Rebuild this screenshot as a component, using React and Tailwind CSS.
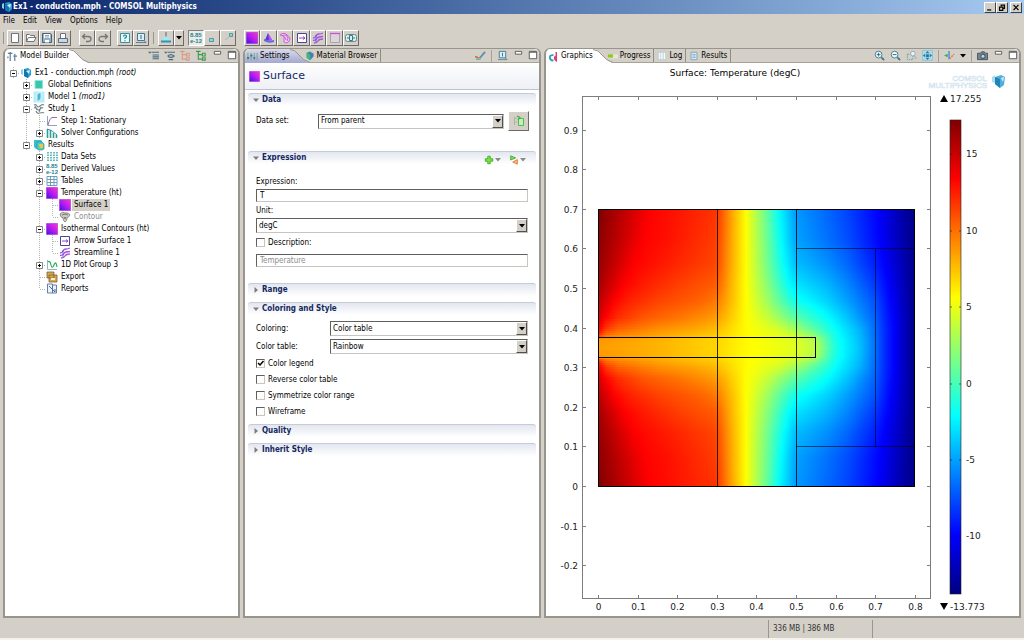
import { useState } from "react";
import clsx from "clsx";

// 12 x 12 drawings shared by the toolbar, the tabs and the model tree
const icons = {
  logo: (
    <>
      <path d="M4 2l4-1 3 2v5l-3 3-4-2z" fill="#2a9fd0" />
      <path d="M4 2l4 2v7L4 9z" fill="#1376ae" />
      <path d="M1 3l2-1v6L1 7z" fill="#7fd3ee" />
      <path d="M6 4l4-1-1 4z" fill="#c9f0fb" />
    </>
  ),
  file: <path d="M2.5 1.5h7v9h-7z" fill="#fff" stroke="#6b7480" />,
  open: <path d="M1.5 9.5v-7h3l1 1h4v2M1.5 9.5l2-4h7.5l-2 4z" fill="#fdfdf4" stroke="#6b7480" />,
  save: (
    <>
      <path d="M1.5 1.5h8l1 1v8h-9z" fill="#8fb3c8" stroke="#4b6272" />
      <path d="M3 2h6v4H3zM4 8h4v2.5H4z" fill="#fff" />
      <path d="M4 3.5h4M4 5h4" stroke="#4b6272" strokeWidth=".6" />
    </>
  ),
  print: (
    <>
      <path d="M3.5 1.5h5v5h-5z" fill="#fff" stroke="#6b7480" />
      <path d="M1.5 6.5h9v4h-9z" fill="#c4dbe6" stroke="#5a6f80" />
    </>
  ),
  undo: <path d="M4 2L1.5 4.5 4 7M2 4.5h5q3 0 3 2.5T7 9.5H5" fill="none" stroke="#767676" strokeWidth="1.3" />,
  redo: <path d="M8 2l2.5 2.5L8 7M10 4.5H5Q2 4.5 2 7t3 2.5h2" fill="none" stroke="#767676" strokeWidth="1.3" />,
  help: (
    <>
      <path d="M1.5 1.5h9v9h-9z" fill="#e4fafa" stroke="#3d8f9c" />
      <path d="M4.5 4.5Q4.5 3 6 3t1.5 1.5Q7.5 5.5 6 6v1M6 8.2v1" fill="none" stroke="#1b7f90" strokeWidth="1.2" />
    </>
  ),
  docs: (
    <>
      <path d="M2.5 1.5h7v7h-7z" fill="#d9f1f7" stroke="#44778f" />
      <path d="M6 3v4" stroke="#34678a" />
      <path d="M1 10.5h10L9 8.5" fill="none" stroke="#5f8098" />
    </>
  ),
  brush: (
    <>
      <path d="M6 0v5" stroke="#8a8a8a" strokeWidth="1.5" />
      <path d="M4 4.5h4l2 4H2z" fill="#9eeaf2" />
      <path d="M1 9.5h10" stroke="#2f94b4" strokeWidth="2" />
    </>
  ),
  axes: <path d="M3.5 6.5h4v3h-4z" fill="#8fd4dd" stroke="#3a8b98" strokeWidth=".8" />,
  corner: (
    <>
      <path d="M7.5 1.5h3v3h-3z" fill="#8fd4dd" stroke="#3a8b98" strokeWidth=".8" />
      <path d="M3 8l4-3" stroke="#9ab4ba" strokeWidth=".8" />
    </>
  ),
  surface: <path d="M.5.5h11v11H.5z" fill="url(#surfaceFill)" stroke="#a02fd0" strokeWidth=".6" />,
  cone: (
    <>
      <path d="M5 1l4 7H2z" fill="#4b3fdc" />
      <path d="M5 1l4 7H6z" fill="#c74bf0" />
      <path d="M1 7q5 2 10 1v2q-5 2-10-1z" fill="#6f66e4" />
    </>
  ),
  contour: (
    <>
      <path d="M1 3q3-3 6-1t4 5q-1 4-4 4T5 7 1 3z" fill="#f6cdf5" stroke="#c85fd8" />
      <path d="M3 4q3-2 5 0t0 5M5 5q2 0 2 3" fill="none" stroke="#c85fd8" />
    </>
  ),
  arrow: (
    <>
      <path d="M1.5 1.5h9v9h-9z" fill="#fff" stroke="#47479a" />
      <path d="M3 6h5M7 4.5L9 6 7 7.5" fill="none" stroke="#9a3fd0" />
    </>
  ),
  stream: (
    <>
      <path d="M1 6q2 0 3-2t3-2 4-1M1 8.5q3 0 4-2t6-2M2 11q3 0 4-2t5-2" fill="none" stroke="#a955e0" strokeWidth="1.3" />
      <path d="M4 3v7" stroke="#4b4bd0" strokeWidth=".8" />
    </>
  ),
  frame: (
    <>
      <path d="M1.5 1.5h9v9h-9z" fill="#dcd6da" stroke="#a79aac" strokeWidth=".9" />
      <path d="M1 1.5h10" stroke="#c455d8" strokeWidth="1.3" />
    </>
  ),
  play: (
    <>
      <rect x=".5" y="2.5" width="11" height="7" rx="2" fill="#dcefee" stroke="#5b8c94" />
      <path d="M4.5 3.5h3v5h-3zM2 6h2M8 6h2" fill="none" stroke="#3b7781" />
    </>
  ),
  global: <path d="M2 1.5h7.5v8H2z" fill="#37c7ae" stroke="#90e6d8" />,
  model: (
    <>
      <path d="M.5.5h11v11H.5z" fill="#b7eef6" />
      <path d="M4 3l4-2v7l-4 3z" fill="#4db4dc" stroke="#eefcff" strokeWidth=".8" />
    </>
  ),
  study: (
    <path
      d="M1 2q2-1 3 1t3 0 4-1M1 5q2-1 3 1t3 0 3-1M3 8q1 3 4 2t4 0M2 3l2 4M8 4L6 9"
      fill="none"
      stroke="#73828c"
      strokeWidth="1.1"
    />
  ),
  step: (
    <>
      <path d="M1.5 1v9.5H11" fill="none" stroke="#90a0c4" />
      <path d="M2 10Q4 3 6 2.500h5" fill="none" stroke="#9a6aa8" />
    </>
  ),
  solver: (
    <>
      <path d="M1.5 2v9M4.500 3v8M7.500 6v5M10.500 8v3" stroke="#2aa189" strokeWidth="1.6" />
      <path d="M1 2q4 0 10 6" fill="none" stroke="#3b8fc4" />
    </>
  ),
  results: (
    <>
      <path d="M1 1h7l1 1v8H3L1 8z" fill="#37bcd8" />
      <path d="M4 3h5l2 2v5l-2 1H5L4 9z" fill="#4fd0b0" stroke="#2b93b4" strokeWidth=".7" />
      <path d="M6 5h4v4H7z" fill="#f2c63a" />
    </>
  ),
  data: <path d="M2 1v10M5 1v10M8 1v10M11 1v10" stroke="#38a8a8" strokeWidth="1.5" strokeDasharray="1.5 1" />,
  digits: (
    <g fill="#1b8591" fontFamily="Liberation Sans" fontSize="6" fontWeight="700">
      <text x="0" y="5">8.85</text>
      <text x="0" y="11">e-12</text>
    </g>
  ),
  table: (
    <>
      <path d="M1 1.5h10v9H1z" fill="#fff" stroke="#6f9fb8" />
      <path d="M1 4.5h10M1 7.5h10M4.5 1v10M8 1v10" stroke="#6f9fb8" />
    </>
  ),
  contourOff: (
    <>
      <path d="M1 3q2-3 5-1 4-1 5 2-1 2-3 3 0 3-2 4-2-1-2-4-3-1-3-4z" fill="#c9c9c2" stroke="#8e8e86" />
      <path d="M3 4q3-2 6 0M5 6l1 2 1-2" fill="none" stroke="#77776f" />
    </>
  ),
  plot1d: (
    <>
      <path d="M1.5 1v9.5H11" fill="none" stroke="#90b8c4" />
      <path d="M2 3q2-2 3 3t3 0 3 2" fill="none" stroke="#2dae5d" strokeWidth="1.2" />
    </>
  ),
  exportIcon: (
    <>
      <path d="M1 1h7v6H1zM3 4h8v7H3z" fill="#d9a64e" stroke="#7b6234" strokeWidth=".8" />
      <path d="M5 7h4v2H5z" fill="#fff2c8" />
    </>
  ),
  report: (
    <>
      <path d="M1.5 1h5v9h-5zM6.5 2h4v8h-4z" fill="#eaf4fc" stroke="#56749a" strokeWidth=".9" />
      <path d="M3 3l6 6M9 9V6" fill="none" stroke="#4a6a94" />
    </>
  ),
  builder: <path d="M3.5 1v10M1 2.5h5M8.5 3v8M7 5.5h4M1 6v2" stroke="#5d7f98" strokeWidth="1.3" />,
  settings: (
    <>
      <path d="M1 2v8M4.5 2v8M8 2v8M11 2v8" stroke="#6d9a8d" strokeWidth=".9" />
      <path d="M0 7.5h2.5M3.5 5H6M7 7.5h2" stroke="#2f8573" strokeWidth="2" />
    </>
  ),
  material: (
    <>
      <path d="M2 2l4-1.5L10 3v4l-4 4-4-3z" fill="#2f91a2" />
      <path d="M2 2l4 2v7L2 8z" fill="#3fb58b" />
      <path d="M6 4l4-1v4z" fill="#7d5bb4" />
    </>
  ),
  graphics: (
    <>
      <path d="M6 4.5Q2 4 2 7t4 3.500" fill="none" stroke="#2a9fc0" strokeWidth="2" />
      <path d="M9 1v9.500q-3-2-1-5" fill="none" stroke="#e0386f" strokeWidth="1.6" />
    </>
  ),
  progress: (
    <>
      <path d="M0 4h12v5H0z" fill="#e6e6d8" />
      <path d="M0 4h6v4H0z" fill="#8fc62a" />
    </>
  ),
  log: <path d="M1.5 1.5h9v9h-9zM4.5 1.5v9M7.5 1.5v9" fill="#f5fafc" stroke="#a9c1ce" strokeWidth=".8" />,
  list: (
    <>
      <path d="M2.5 1.5h7v9h-7z" fill="#e7f4fb" stroke="#6e9ab5" />
      <path d="M4 4h4M4 6h4M4 8h4" stroke="#4d87a8" strokeWidth=".8" />
    </>
  ),
  collapse: (
    <>
      <path d="M0 2h4L2 4z" fill="#4b6b80" />
      <path d="M4 2.5h8M5 5.5h7M5 7.5h7M5 9.5h7" stroke="#4b6b80" strokeWidth="1.2" />
    </>
  ),
  show: (
    <>
      <path d="M0 2h4L2 4z" fill="#4b6b80" />
      <path d="M4 2.5h8M5 10.5h5M4 6.5q3.500-3 7 0-3.500 3-7 0" fill="none" stroke="#4b6b80" strokeWidth="1.2" />
    </>
  ),
  treeRed: <path d="M2.5 1v9.500M2.500 5h4M2.500 10h4M0 1.500h5M7 3.500h3v3H7zM7 8.500h3V11H7z" fill="none" stroke="#d99a83" strokeWidth="1.2" />,
  treeGreen: <path d="M2.5 1v9.500M2.500 5h4M2.500 10h4M0 1.500h5M7 3.500h3v3H7zM7 8.500h3V11H7z" fill="none" stroke="#3d9a4b" strokeWidth="1.2" />,
  paint: (
    <>
      <path d="M5 9l6-7" fill="none" stroke="#5a8faa" strokeWidth="2" />
      <path d="M0 7l4 1.500" stroke="#e05a3d" strokeWidth="1.5" />
      <path d="M1 10h5" stroke="#4cb072" strokeWidth="1.2" />
    </>
  ),
  zoomIn: (
    <>
      <circle cx="5" cy="5" r="3.7" fill="#e8f7fb" stroke="#48788c" />
      <path d="M3 5h4M5 3v4" stroke="#2b6a80" />
      <path d="M8 8l3 3" stroke="#48788c" strokeWidth="2" />
    </>
  ),
  zoomOut: (
    <>
      <circle cx="5" cy="5" r="3.7" fill="#e8f7fb" stroke="#48788c" />
      <path d="M3 5h4" stroke="#2b6a80" />
      <path d="M8 8l3 3" stroke="#48788c" strokeWidth="2" />
    </>
  ),
  zoomBox: (
    <>
      <path d="M1.5 4.5h6v6h-6z" fill="none" stroke="#5e9ab0" strokeDasharray="1.5 1" />
      <circle cx="7.5" cy="4" r="2.5" fill="#e8f7fb" stroke="#8fa9b4" />
      <path d="M9 6l2.5 4" stroke="#8fa9b4" />
    </>
  ),
  extents: (
    <>
      <path d="M.5.5h11v11H.5z" fill="#a8dbe9" stroke="#8cc5d6" />
      <path d="M6 1l2 2.500H4zM6 11l2-2.500H4zM1 6l2.500-2v4zM11 6L8.500 4v4zM4.500 4.500h3v3h-3z" fill="#27749a" />
    </>
  ),
  view: (
    <>
      <path d="M5.500 1v9" stroke="#3a86d4" strokeWidth="1.4" />
      <path d="M0 6l4-2v4z" fill="#32b25a" />
      <path d="M6 9.500l5-5" stroke="#e2743b" strokeWidth="1.6" strokeDasharray="2 1" />
    </>
  ),
  camera: (
    <>
      <path d="M.5 3.5H4L5 2h3l1 1.5h2.5v7H.5z" fill="#75858f" stroke="#44535e" />
      <circle cx="6.5" cy="6.800" r="2.3" fill="#b9d5df" stroke="#33434e" />
    </>
  ),
  minimize: <path d="M2.5 1.5h7v3h-7z" fill="#fff" stroke="#555" />,
  maximize: <path d="M2.5 1.5h8v8h-8zM2.5 2.5h8" fill="#fff" stroke="#555" />,
  plus: <path d="M4.5 1.5h3v3h3v3h-3v3h-3v-3h-3v-3h3z" fill="#7ce04b" stroke="#38a81e" />,
  replace: (
    <>
      <path d="M2 1l6 2.500L2 6z" fill="#8fdc5c" stroke="#3ba32c" />
      <path d="M10 5.500V11L4.500 8.500z" fill="#f7b780" stroke="#e0762c" />
    </>
  ),
  goto: (
    <>
      <path d="M1.5 2v8M1.5 3h3M1.5 7h3" stroke="#a8b8a8" />
      <path d="M5.5 3.5h5v7h-5z" fill="#c4efb9" stroke="#55b955" />
      <path d="M4 1l3 1.500L5 5" fill="none" stroke="#3fae3f" strokeWidth="1.2" />
    </>
  ),
};

function Icon({ name, className = "size-3" }) {
  return (
    <svg viewBox="0 0 12 12" className={clsx("shrink-0", className)} aria-hidden="true">
      {icons[name]}
    </svg>
  );
}

function Caret({ className = "text-black" }) {
  return (
    <svg viewBox="0 0 6 4" className={clsx("h-1 w-[6px] shrink-0", className)} aria-hidden="true">
      <path d="M0 0h6L3 3.5z" fill="currentColor" />
    </svg>
  );
}

const winButtons = [
  { label: "Minimize", path: "M2 8.5h5" },
  { label: "Restore", path: "M4.5 4V2.5h4v4H7M2.5 5h4v4h-4z" },
  { label: "Close", path: "M2.5 2.5l6 6M8.5 2.5l-6 6" },
];

function TitleBar() {
  return (
    <header className="flex h-[14px] items-center bg-linear-to-r from-[#0a246a] to-[#a6caf0] pr-[2px] pl-px text-white">
      <Icon name="logo" />
      <h1 className="flex-1 text-[8px] leading-3 font-bold">Ex1 - conduction.mph - COMSOL Multiphysics</h1>
      {winButtons.map((button) => (
        <button
          key={button.label}
          aria-label={button.label}
          className="h-[11px] w-3 border border-t-white border-r-[#404040] border-b-[#404040] border-l-white bg-[#d4d0c8] last:ml-[2px]"
        >
          <svg viewBox="0 0 11 11" className="size-full" aria-hidden="true">
            <path d={button.path} fill="none" stroke="#000" strokeWidth="1.5" />
          </svg>
        </button>
      ))}
    </header>
  );
}

function MenuBar() {
  return (
    <nav className="flex h-[14px] items-center gap-2 pl-[3px]">
      {["File", "Edit", "View", "Options", "Help"].map((item) => (
        <button key={item}>{item}</button>
      ))}
    </nav>
  );
}

function ToolButton({ icon, label, pressed = false, className = "w-4" }) {
  return (
    <button
      aria-label={label}
      className={clsx(
        "flex h-4 items-center justify-center border",
        pressed
          ? "border-t-[#808080] border-r-white border-b-white border-l-[#808080] bg-[#eceae6]"
          : "border-t-white border-r-[#6e6b66] border-b-[#6e6b66] border-l-white",
        className
      )}
    >
      {icon === "caret" ? <Caret /> : <Icon name={icon} />}
    </button>
  );
}

const Divider = () => <span className="mx-1 h-3 w-px bg-[#9a968e]" />;

function Toolbar() {
  return (
    <div className="flex h-5 items-center pb-px pl-[3px]">
      <span className="mr-[3px] h-3 w-px bg-[#9a968e]" />
      <div className="flex">
        <ToolButton icon="file" label="New" />
        <ToolButton icon="open" label="Open" />
        <ToolButton icon="save" label="Save" />
        <ToolButton icon="print" label="Print" />
      </div>
      <div className="ml-2 flex">
        <ToolButton icon="undo" label="Undo" />
        <ToolButton icon="redo" label="Redo" />
      </div>
      <div className="ml-[6px] flex">
        <ToolButton icon="help" label="Help" />
        <ToolButton icon="docs" label="Documentation" />
      </div>
      <Divider />
      <div className="flex">
        <ToolButton icon="brush" label="Clear" />
        <ToolButton icon="caret" label="Clear options" className="w-[10px]" />
      </div>
      <div className="ml-1 flex">
        <ToolButton icon="digits" label="Precision" pressed />
        <ToolButton icon="axes" label="Point" />
        <ToolButton icon="corner" label="Corner" />
      </div>
      <div className="ml-2 flex">
        <ToolButton icon="surface" label="Surface" />
        <ToolButton icon="cone" label="Height" className="w-[17px]" />
        <ToolButton icon="contour" label="Contour" />
        <ToolButton icon="arrow" label="Arrow Surface" className="w-[17px]" />
        <ToolButton icon="stream" label="Streamline" />
        <ToolButton icon="frame" label="Boundary" className="w-[17px]" />
        <ToolButton icon="play" label="Player" />
      </div>
    </div>
  );
}

function ViewButton({ icon }) {
  return (
    <button aria-label={icon} className="flex">
      <Icon name={icon} className="size-[11px]" />
    </button>
  );
}

function TabStrip({ active, icon, focused = false, others = [], children }) {
  return (
    <div className="flex h-[14px] items-stretch rounded-t-md border-b border-[#a5a29a] bg-[#d4d0c8]">
      <div
        className={clsx(
          "-mb-px flex items-center gap-[2px] rounded-tl-md pl-[2px]",
          focused ? "bg-linear-to-b from-[#dadbe8] to-[#a4a9cf]" : "bg-white"
        )}
      >
        <Icon name={icon} className="size-[11px]" />
        <button className="text-left">{active}</button>
      </div>
      <svg viewBox="0 0 20 14" className="-mr-2 -mb-px h-[14px] w-5 shrink-0" aria-hidden="true">
        <path d="M0 0Q5 0 9 6t11 8H0z" fill={focused ? "url(#focusedTab)" : "#fff"} />
        <path d="M0 .5Q5 .5 9 6t11 7.500" fill="none" stroke="#98958e" />
      </svg>
      {others.map((tab) => (
        <button
          key={tab.label}
          className="flex items-center gap-[2px] border-r border-[#908d86] px-[3px] pt-px leading-3"
        >
          <Icon name={tab.icon} className="size-[10px]" />
          {tab.label}
        </button>
      ))}
      <div className="flex flex-1 items-center justify-end gap-[5px] pr-px">
        {children}
        <div className="flex gap-[3px]">
          <ViewButton icon="minimize" />
          <ViewButton icon="maximize" />
        </div>
      </div>
    </div>
  );
}

function Panel({ tabs, children }) {
  return (
    <section className="flex min-w-0 flex-col rounded-t-md border-x-2 border-t border-b-2 border-[#98958f] bg-white">
      {tabs}
      {children}
    </section>
  );
}

// guides: one letter for each column left of the icon
// " " empty, "|" line, "t" tee, "l" elbow, "+" / "-" expander, lower rows joined by the line
const tree = [
  { guides: "-", icon: "logo", label: "Ex1 - conduction.mph", tag: "(root)" },
  { guides: " +", icon: "global", label: "Global Definitions" },
  { guides: " +", icon: "model", label: "Model 1", tag: "(mod1)" },
  { guides: " -", icon: "study", label: "Study 1" },
  { guides: " |t", icon: "step", label: "Step 1: Stationary" },
  { guides: " |+", icon: "solver", label: "Solver Configurations" },
  { guides: " -", icon: "results", label: "Results" },
  { guides: "  +", icon: "data", label: "Data Sets" },
  { guides: "  +", icon: "digits", label: "Derived Values" },
  { guides: "  +", icon: "table", label: "Tables" },
  { guides: "  -", icon: "surface", label: "Temperature (ht)" },
  { guides: "  |t", icon: "surface", label: "Surface 1" },
  { guides: "  |l", icon: "contourOff", label: "Contour", off: true },
  { guides: "  -", icon: "surface", label: "Isothermal Contours (ht)" },
  { guides: "  |t", icon: "arrow", label: "Arrow Surface 1" },
  { guides: "  |l", icon: "stream", label: "Streamline 1" },
  { guides: "  +", icon: "plot1d", label: "1D Plot Group 3" },
  { guides: "  t", icon: "exportIcon", label: "Export" },
  { guides: "  l", icon: "report", label: "Reports" },
];

function Guide({ kind }) {
  const box = kind === "+" || kind === "-";
  return (
    <svg viewBox="0 0 13 12" className="h-3 w-[13px] shrink-0" aria-hidden="true">
      <g stroke="#b4b4b4" strokeDasharray="1 1">
        {kind !== " " && <path d={kind === "l" ? "M6.5 0v6" : "M6.5 0v12"} />}
        {kind !== " " && kind !== "|" && <path d="M7 6.5h6" />}
      </g>
      {box && <path d="M3.5 3.5h6v6h-6z" fill="#fff" stroke="#848484" />}
      {box && <path d={kind === "+" ? "M5 6.5h3M6.5 5v3" : "M5 6.5h3"} stroke="#000" />}
    </svg>
  );
}

function ModelTree() {
  const [selected, setSelected] = useState("Surface 1");

  return (
    <ul className="pt-1 pl-[2px]" role="tree">
      {tree.map((node) => (
        <li
          key={node.label}
          role="treeitem"
          aria-selected={selected === node.label}
          className="flex h-3 items-center"
        >
          {node.guides.split("").map((kind, i) => (
            <Guide key={i} kind={kind} />
          ))}
          <Icon name={node.icon} />
          <button
            onClick={() => setSelected(node.label)}
            className={clsx(
              "ml-px px-[2px] leading-3 whitespace-nowrap",
              selected === node.label && "bg-[#d4d0c8]",
              node.off && "text-[#8c8c8c]"
            )}
          >
            {node.label} {node.tag && <i>{node.tag}</i>}
          </button>
        </li>
      ))}
    </ul>
  );
}

function SectionHeader({ title, open = false, children }) {
  return (
    <div className="mx-[3px] flex h-[13px] items-center rounded-t-[3px] border-t border-[#c6cbd8] bg-linear-to-b from-[#e2e6ef] to-white pl-[5px]">
      <svg viewBox="0 0 6 6" className="size-[6px]" aria-hidden="true">
        <path d={open ? "M0 1.5h6L3 5z" : "M1.5 0L5 3 1.5 6z"} fill="#7d7d7d" />
      </svg>
      <h3 className="ml-[3px] flex-1 font-bold text-[#14285f]">{title}</h3>
      {children}
    </div>
  );
}

function SelectBox({ id, value, className }) {
  return (
    <div className={clsx("relative h-[15px]", className)}>
      <select
        id={id}
        defaultValue={value}
        className="size-full appearance-none border border-t-[#606060] border-r-[#c8c5be] border-b-[#c8c5be] border-l-[#606060] bg-white pl-[2px] leading-3"
      >
        <option>{value}</option>
      </select>
      <span className="pointer-events-none absolute inset-y-px right-px flex w-[11px] items-center justify-center border border-t-white border-r-[#505050] border-b-[#505050] border-l-white bg-[#d4d0c8]">
        <Caret />
      </span>
    </div>
  );
}

function CheckBox({ label, checked = false }) {
  return (
    <label className="flex h-3 items-center gap-[3px]">
      <span className="grid size-[9px] -translate-y-px">
        <input
          type="checkbox"
          defaultChecked={checked}
          className="peer col-start-1 row-start-1 size-[9px] appearance-none border border-t-[#606060] border-r-[#c8c5be] border-b-[#c8c5be] border-l-[#606060] bg-white"
        />
        <svg
          viewBox="0 0 9 9"
          className="pointer-events-none invisible col-start-1 row-start-1 size-[9px] peer-checked:visible"
          aria-hidden="true"
        >
          <path d="M2 4l2 2 3.5-4" fill="none" stroke="#000" strokeWidth="1.5" />
        </svg>
      </span>
      {label}
    </label>
  );
}

const field =
  "h-[13px] w-full border border-t-[#606060] border-r-[#c8c5be] border-b-[#c8c5be] border-l-[#606060] bg-white px-[3px] leading-3";

function SettingsForm() {
  return (
    <form className="flex-1">
      <div className="flex h-[27px] items-center gap-[3px] border-b border-[#bcc3d6] bg-linear-to-b from-white to-[#eef0f6] pl-1">
        <Icon name="surface" className="size-[11px]" />
        <h2 className="font-['DejaVu_Sans'] text-[11px] leading-4 text-[#14285f]">Surface</h2>
      </div>

      <div className="pt-[3px] pb-5">
        <SectionHeader title="Data" open />
        <div className="mt-[5px] flex h-5 items-center pr-[10px] pl-[11px]">
          <label htmlFor="dataset" className="w-[62px]">Data set:</label>
          <SelectBox id="dataset" value="From parent" className="flex-1" />
          <button
            type="button"
            aria-label="Go to source"
            className="ml-1 flex h-5 w-[21px] items-center justify-center border border-t-white border-r-[#6e6b66] border-b-[#6e6b66] border-l-white bg-[#d4d0c8]"
          >
            <Icon name="goto" />
          </button>
        </div>
      </div>

      <div className="pb-4">
        <SectionHeader title="Expression" open>
          <div className="flex gap-2 pt-1 pr-[10px]">
            <button type="button" aria-label="Insert expression" className="flex items-center gap-px">
              <Icon name="plus" className="size-[10px]" />
              <Caret className="text-[#8a8a8a]" />
            </button>
            <button type="button" aria-label="Replace expression" className="flex items-center gap-px">
              <Icon name="replace" className="size-[10px]" />
              <Caret className="text-[#8a8a8a]" />
            </button>
          </div>
        </SectionHeader>
        <div className="px-[11px] pt-3">
          <label htmlFor="expression" className="block">Expression:</label>
          <input id="expression" defaultValue="T" className={clsx(field, "mt-px block")} />
          <label htmlFor="unit" className="mt-[3px] block">Unit:</label>
          <SelectBox id="unit" value="degC" className="mt-px mb-1" />
          <CheckBox label="Description:" />
          <input
            aria-label="Description"
            defaultValue="Temperature"
            disabled
            className={clsx(field, "mt-[5px] block text-[#8c8c8c]")}
          />
        </div>
      </div>

      <SectionHeader title="Range" />

      <div className="py-[6px]">
        <SectionHeader title="Coloring and Style" open />
        <div className="flex flex-col gap-[3px] px-[11px] pt-[6px]">
          <div className="flex items-center">
            <label htmlFor="coloring" className="w-[74px]">Coloring:</label>
            <SelectBox id="coloring" value="Color table" className="flex-1" />
          </div>
          <div className="flex items-center">
            <label htmlFor="colortable" className="w-[74px]">Color table:</label>
            <SelectBox id="colortable" value="Rainbow" className="flex-1" />
          </div>
        </div>
        <div className="flex flex-col gap-1 px-[11px] pt-1">
          <CheckBox label="Color legend" checked />
          <CheckBox label="Reverse color table" />
          <CheckBox label="Symmetrize color range" />
          <CheckBox label="Wireframe" />
        </div>
      </div>

      <div className="flex flex-col gap-[6px]">
        <SectionHeader title="Quality" />
        <SectionHeader title="Inherit Style" />
      </div>
    </form>
  );
}

// temperature on the plate, 0..1 of the color range, as [x, value] pairs
// for a few distances from the middle of the rod
const field2d = [
  { d: 0, pts: [[0, 0.72], [60, 0.7], [119, 0.665], [147, 0.63], [180, 0.61], [198, 0.595], [218, 0.56], [226, 0.49], [236, 0.415], [244, 0.375], [262, 0.315], [277, 0.235], [286, 0.17], [296, 0.125], [305, 0.07], [316, 0.01]] },
  { d: 10, pts: [[0, 0.73], [60, 0.7], [119, 0.665], [147, 0.63], [180, 0.605], [198, 0.59], [218, 0.545], [226, 0.475], [236, 0.405], [243, 0.375], [262, 0.31], [277, 0.235], [286, 0.17], [296, 0.125], [305, 0.07], [316, 0.01]] },
  { d: 14, pts: [[0, 0.84], [8, 0.77], [20, 0.745], [60, 0.715], [119, 0.675], [147, 0.63], [180, 0.6], [198, 0.57], [214, 0.52], [226, 0.45], [241, 0.375], [262, 0.305], [277, 0.23], [286, 0.17], [296, 0.125], [305, 0.07], [316, 0.01]] },
  { d: 20, pts: [[0, 0.89], [8, 0.82], [20, 0.78], [60, 0.735], [100, 0.71], [119, 0.69], [147, 0.63], [180, 0.585], [198, 0.53], [214, 0.47], [226, 0.425], [238, 0.375], [262, 0.3], [277, 0.23], [286, 0.17], [296, 0.125], [305, 0.07], [316, 0.01]] },
  { d: 31, pts: [[0, 0.92], [8, 0.87], [20, 0.83], [45, 0.79], [80, 0.76], [119, 0.72], [147, 0.63], [170, 0.57], [198, 0.465], [214, 0.42], [230, 0.375], [250, 0.315], [277, 0.22], [286, 0.165], [295, 0.125], [305, 0.07], [316, 0.01]] },
  { d: 48, pts: [[0, 0.945], [16, 0.875], [30, 0.845], [60, 0.81], [100, 0.78], [119, 0.755], [147, 0.63], [170, 0.53], [185, 0.45], [198, 0.39], [212, 0.365], [230, 0.33], [250, 0.28], [277, 0.205], [286, 0.155], [293, 0.125], [304, 0.07], [316, 0.01]] },
  { d: 65, pts: [[0, 0.965], [26, 0.875], [45, 0.85], [80, 0.815], [119, 0.785], [133, 0.7], [147, 0.63], [170, 0.505], [191, 0.375], [198, 0.35], [214, 0.325], [230, 0.3], [250, 0.255], [277, 0.18], [290, 0.125], [304, 0.065], [316, 0.01]] },
  { d: 85, pts: [[0, 0.98], [36, 0.875], [60, 0.855], [119, 0.805], [133, 0.71], [147, 0.63], [170, 0.485], [186, 0.375], [198, 0.31], [214, 0.29], [230, 0.265], [250, 0.225], [277, 0.155], [286, 0.125], [303, 0.06], [316, 0.01]] },
  { d: 110, pts: [[0, 0.99], [46, 0.875], [70, 0.86], [119, 0.815], [133, 0.715], [147, 0.63], [170, 0.475], [183, 0.375], [198, 0.285], [230, 0.235], [250, 0.2], [282, 0.125], [303, 0.05], [316, 0.01]] },
  { d: 139, pts: [[0, 1], [52, 0.875], [80, 0.855], [119, 0.825], [133, 0.72], [147, 0.63], [170, 0.465], [181, 0.375], [198, 0.275], [230, 0.225], [250, 0.19], [280, 0.125], [303, 0.045], [316, 0.01]] },
];

function valueAt(pts, x) {
  const i = Math.max(1, pts.findIndex((p) => p[0] >= x));
  const [x0, v0] = pts[i - 1];
  const [x1, v1] = pts[i];
  return v0 + ((v1 - v0) * (x - x0)) / (x1 - x0);
}

function temperature(x, d) {
  const i = Math.max(1, field2d.findIndex((row) => row.d >= d));
  const a = field2d[i - 1];
  const b = field2d[i];
  const k = (d - a.d) / (b.d - a.d);
  return valueAt(a.pts, x) * (1 - k) + valueAt(b.pts, x) * k;
}

function rainbow(t) {
  const channel = (center) => Math.round(255 * Math.min(1, Math.max(0, 1.5 - Math.abs(4 * t - center))));
  return `rgb(${channel(3)},${channel(2)},${channel(1)})`;
}

const columns = Array.from({ length: 80 }, (_, i) => i * 4);
const bands = Array.from({ length: 70 }, (_, i) => i * 2 + 1);
const legendStops = Array.from({ length: 33 }, (_, i) => i / 32);

const xTicks = [0, 0.1, 0.2, 0.3, 0.4, 0.5, 0.6, 0.7, 0.8];
const yTicks = [0.9, 0.8, 0.7, 0.6, 0.5, 0.4, 0.3, 0.2, 0.1, 0, -0.1, -0.2];
const legendTicks = [15, 10, 5, 0, -5, -10];

const plotX = (x) => Math.round(52 + x * 396) + 0.5;
const plotY = (y) => Math.round(423 - y * 396) + 0.5;
const legendY = (v) => Math.round(57 + ((17.255 - v) / 31.028) * 474);

function TemperaturePlot() {
  return (
    <svg
      viewBox="0 0 473 553"
      className="h-0 min-h-[400px] w-full grow font-['DejaVu_Sans'] text-[9px]"
      role="img"
      aria-label="Surface: Temperature (degC)"
    >
      <defs>
        {bands.map((d) => (
          <linearGradient key={d} id={`band${d}`} gradientUnits="userSpaceOnUse" x1="0" y1="0" x2="316" y2="0">
            {columns.map((x) => (
              <stop key={x} offset={x / 316} stopColor={rainbow(temperature(x, d))} />
            ))}
          </linearGradient>
        ))}
        <linearGradient id="legend" x1="0" y1="0" x2="0" y2="1">
          {legendStops.map((t) => (
            <stop key={t} offset={t} stopColor={rainbow(1 - t)} />
          ))}
        </linearGradient>
      </defs>

      <text x="189" y="13" textAnchor="middle">Surface: Temperature (degC)</text>

      <g transform="translate(52 146)" shapeRendering="crispEdges">
        {bands.map((d) => (
          <g key={d} fill={`url(#band${d})`}>
            <rect x="0" y={139 - d} width="317" height="2" />
            <rect x="0" y={137 + d} width="317" height="2" />
          </g>
        ))}
        <g fill="none" stroke="#000">
          <path d="M.5.5h316v277H.5z" />
          <path d="M119.5 0v277M198.5 0v277" strokeOpacity=".8" />
          <path d="M0 128.5h217.5v20H0" />
          <path d="M198 39.5h118M198 237.5h118M277.5 40v198" strokeOpacity=".55" />
        </g>
      </g>

      <g fill="none" stroke="#7d7d7d" shapeRendering="crispEdges">
        <path d="M36.5 33.5h348v502h-348z" />
        {xTicks.map((x) => (
          <path key={x} d={`M${plotX(x)} 33v4M${plotX(x)} 536v-4`} />
        ))}
        {yTicks.map((y) => (
          <path key={y} d={`M36 ${plotY(y)}h4M385 ${plotY(y)}h-4`} />
        ))}
      </g>
      <g fill="#222">
        {xTicks.map((x) => (
          <text key={x} x={plotX(x)} y="547" textAnchor="middle">{x}</text>
        ))}
        {yTicks.map((y) => (
          <text key={y} x="32" y={plotY(y) + 3} textAnchor="end">{y}</text>
        ))}
        {legendTicks.map((v) => (
          <text key={v} x="420" y={legendY(v) + 3}>{v}</text>
        ))}
        <text x="404" y="39">17.255</text>
        <text x="404" y="547">-13.773</text>
      </g>

      <path d="M394 39l4-7 4 7zM394 540h8l-4 7z" fill="#000" />
      <rect x="404" y="57" width="11" height="474" fill="url(#legend)" stroke="#222" strokeWidth=".6" />
      <g stroke="#222" strokeOpacity=".6">
        {legendTicks.map((v) => (
          <path key={v} d={`M404 ${legendY(v)}h2M413 ${legendY(v)}h2`} />
        ))}
      </g>

      <g fill="#fff" stroke="#d3e5ee" strokeWidth=".6" textAnchor="end" className="font-['Liberation_Sans'] text-[8px]">
        <text x="441" y="18">COMSOL</text>
        <text x="441" y="25">MULTIPHYSICS</text>
      </g>
      <g transform="translate(445 11)">
        <path d="M1 3l3-2v8L1 8z" fill="#a8dcf0" />
        <path d="M4 3l6-2 4 2-1 8-4 3-5-4z" fill="#4fb0da" />
        <path d="M4 3l5 2v9l-5-4z" fill="#2382b8" />
        <path d="M10 4l3-1-1 5z" fill="#d4f1fb" />
      </g>
    </svg>
  );
}

function App() {
  return (
    <div className="flex min-h-screen flex-col bg-[#d4d0c8] font-['DejaVu_Sans_Condensed','DejaVu_Sans',sans-serif] text-[8px] leading-3 text-black">
      <svg className="absolute size-0" aria-hidden="true">
        <defs>
          <linearGradient id="surfaceFill" x1="0" y1="1" x2="1" y2="0">
            <stop offset="0" stopColor="#3a12e8" />
            <stop offset=".5" stopColor="#b51cf0" />
            <stop offset="1" stopColor="#ff35c8" />
          </linearGradient>
          <linearGradient id="focusedTab" x1="0" y1="0" x2="0" y2="1">
            <stop offset="0" stopColor="#dadbe8" />
            <stop offset="1" stopColor="#a4a9cf" />
          </linearGradient>
        </defs>
      </svg>

      <TitleBar />
      <MenuBar />
      <Toolbar />

      <main className="grid flex-1 grid-cols-[237fr_298fr_477fr] gap-[3px] px-[3px] pb-px">
        <Panel
          tabs={
            <TabStrip active="Model Builder" icon="builder">
              <ViewButton icon="collapse" />
              <ViewButton icon="show" />
              <ViewButton icon="treeRed" />
              <ViewButton icon="treeGreen" />
            </TabStrip>
          }
        >
          <ModelTree />
        </Panel>

        <Panel
          tabs={
            <TabStrip active="Settings" icon="settings" focused others={[{ icon: "material", label: "Material Browser" }]}>
              <ViewButton icon="paint" />
              <span className="h-3 w-px bg-[#a5a29a]" />
              <ViewButton icon="docs" />
            </TabStrip>
          }
        >
          <SettingsForm />
        </Panel>

        <Panel
          tabs={
            <TabStrip
              active="Graphics"
              icon="graphics"
              others={[
                { icon: "progress", label: "Progress" },
                { icon: "log", label: "Log" },
                { icon: "list", label: "Results" },
              ]}
            >
              <ViewButton icon="zoomIn" />
              <ViewButton icon="zoomOut" />
              <ViewButton icon="zoomBox" />
              <ViewButton icon="extents" />
              <span className="h-3 w-px bg-[#a5a29a]" />
              <ViewButton icon="view" />
              <Caret />
              <span className="h-3 w-px bg-[#a5a29a]" />
              <ViewButton icon="camera" />
            </TabStrip>
          }
        >
          <TemperaturePlot />
        </Panel>
      </main>

      <footer className="flex h-[21px] justify-end border-b-2 border-[#f4f3ee] pt-px">
        <div className="flex w-[105px] items-center border-x border-[#9a968e] pl-1 text-[#333]">336 MB | 386 MB</div>
        <div className="w-[151px]" />
      </footer>
    </div>
  );
}

export default App;
